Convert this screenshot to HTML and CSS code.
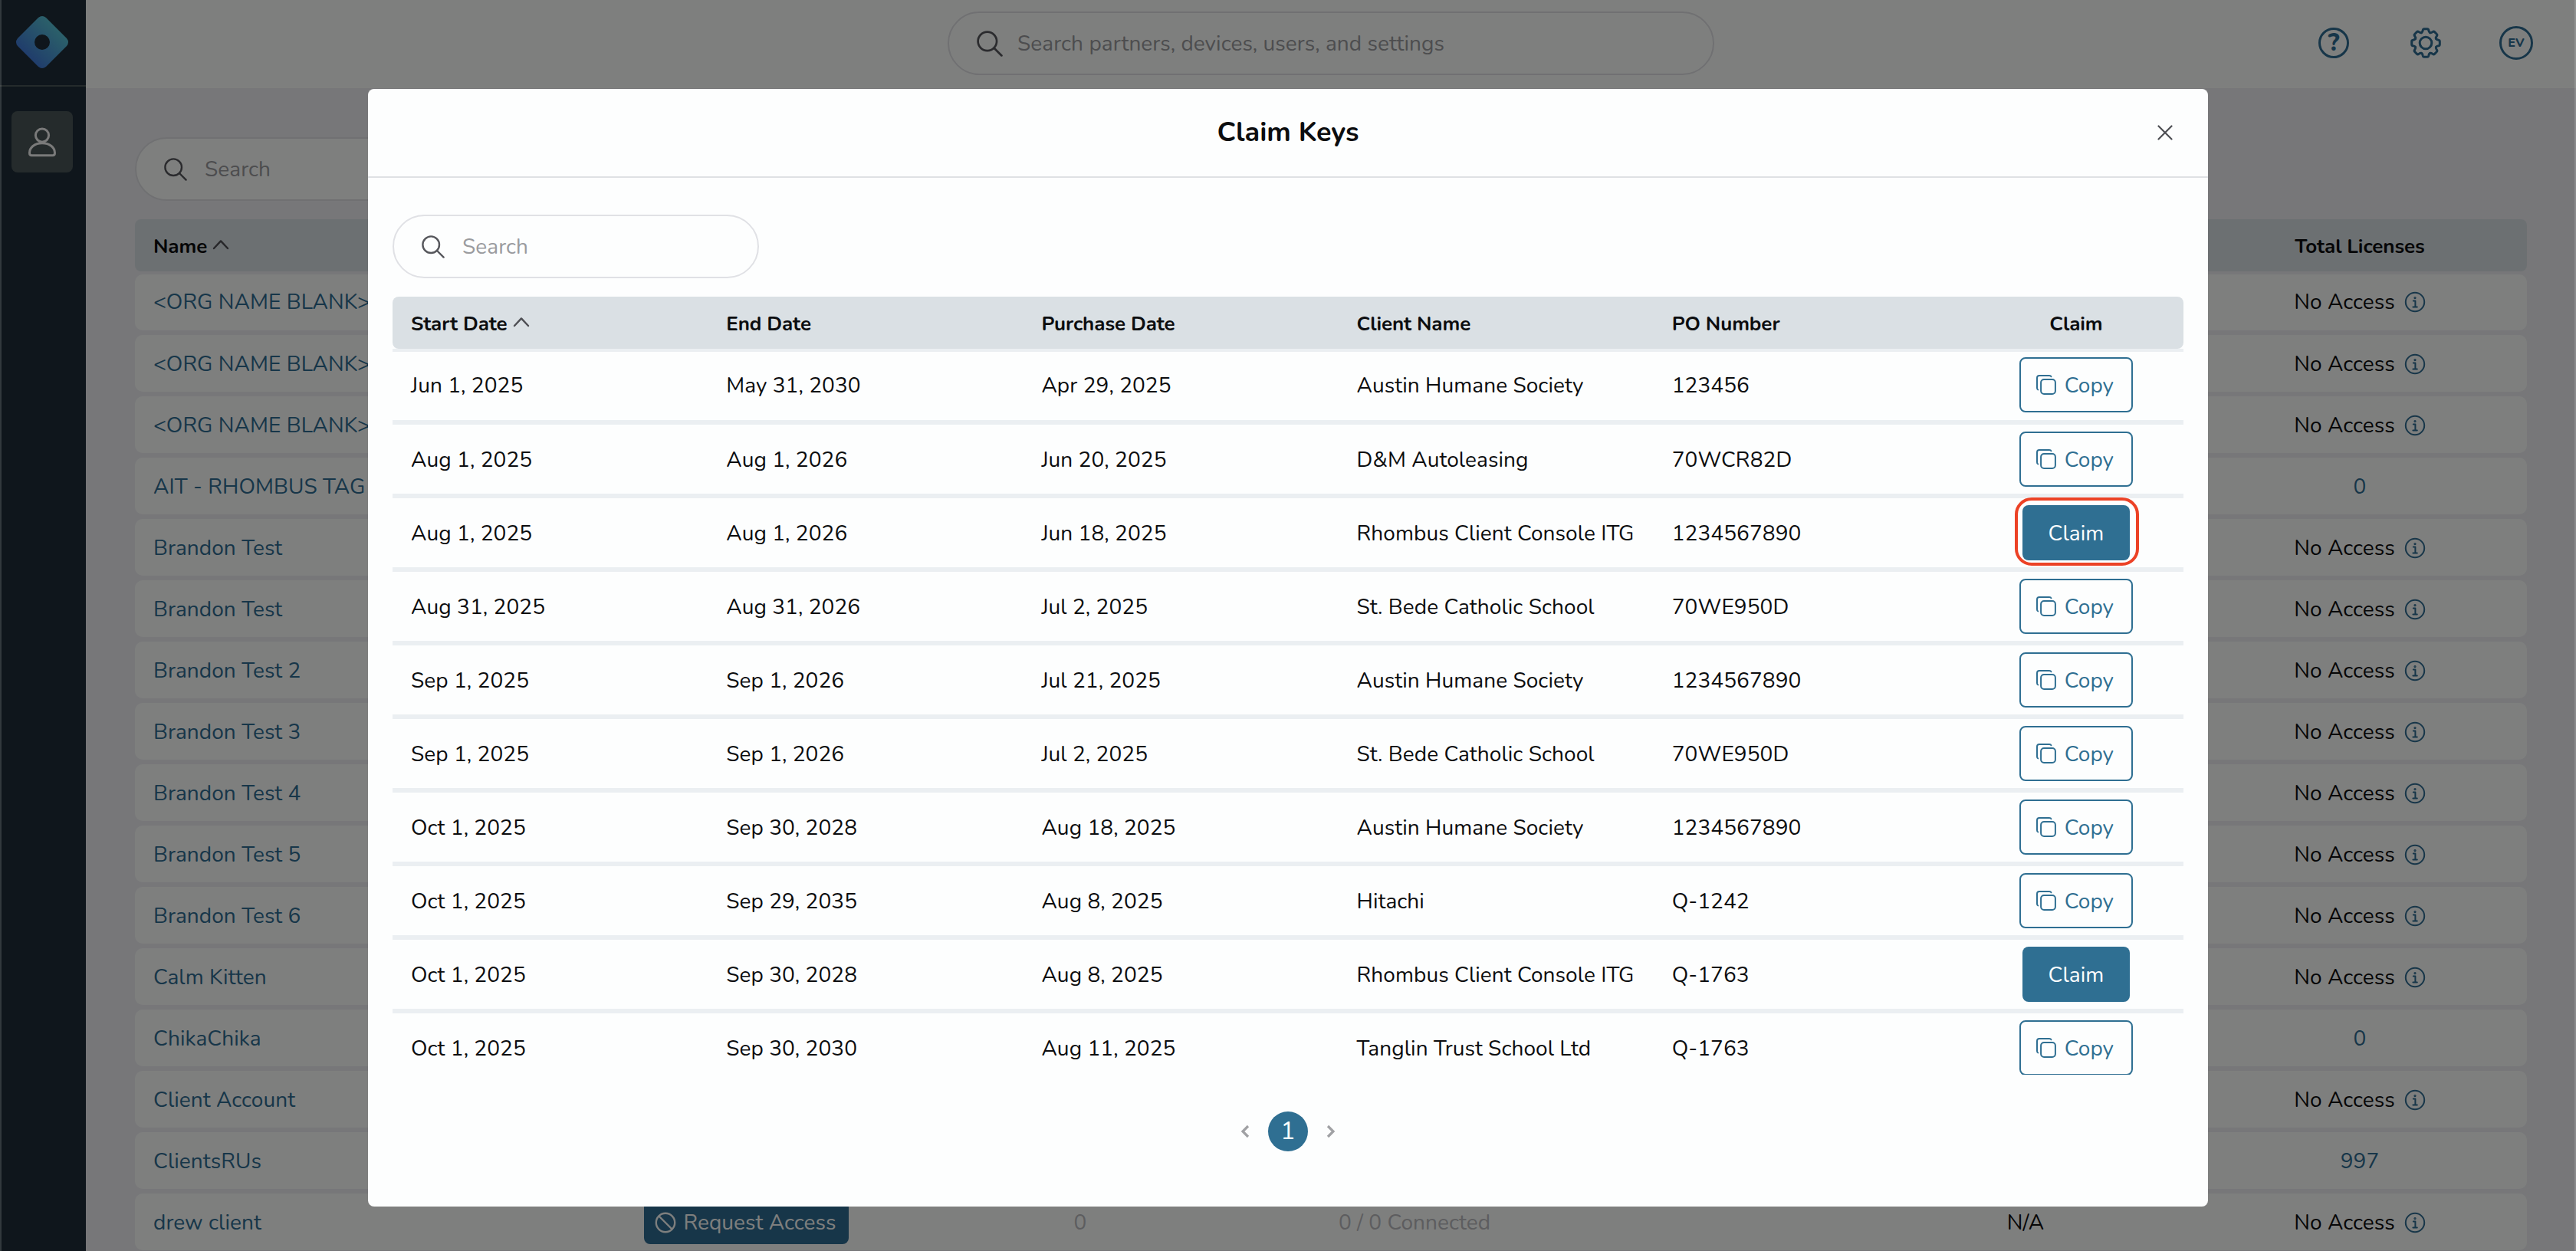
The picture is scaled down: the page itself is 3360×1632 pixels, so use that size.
FILE: index.html
```html
<!DOCTYPE html>
<html lang="en">
<head>
    <meta charset="UTF-8">
    <meta name="viewport" content="width=device-width, initial-scale=1.0">
    <title>Claim Keys</title>
    <link rel="stylesheet" href="styles.css">
</head>
<body>
    <svg class="sprite" aria-hidden="true">
        <defs>
            <linearGradient id="logoGradient" x1="0.1" y1="0.9" x2="0.8" y2="0.2">
                <stop offset="0" stop-color="#3a70dc"/>
                <stop offset="0.15" stop-color="#4078d8"/>
                <stop offset="1" stop-color="#58c4d4"/>
            </linearGradient>
        </defs>
        <symbol id="i-search" viewBox="0 0 30 30">
            <circle cx="12.2" cy="12.2" r="10.8"/>
            <path d="M20 20l8.6 8.6"/>
        </symbol>
        <symbol id="i-caret" viewBox="0 0 22 14">
            <path d="M2 12l9-9.6 9 9.6"/>
        </symbol>
        <symbol id="i-info" viewBox="0 0 28 28">
            <circle cx="14" cy="14" r="12.2"/>
            <path d="M11.8 12.4h2.6v7.6M11.4 20.4h5.4"/>
            <circle cx="14" cy="8.6" r="0.6"/>
        </symbol>
        <symbol id="i-copy" viewBox="0 0 28 28">
            <rect x="7.1" y="7.1" width="18.8" height="18.8" rx="4"/>
            <path d="M3.2 20.4Q2 20 2 18V5q0-3 3-3h13q2 0 2.400 1.200"/>
        </symbol>
    </svg>

    <div class="app">
        <nav class="sidebar">
            <div class="logo">
                <svg width="70" height="70" viewBox="-35 -35 70 70">
                    <path fill="url(#logoGradient)" fill-rule="evenodd" d="M-5-32Q0-36 5-32L32-5Q36 0 32 5L5 32Q0 36-5 32L-32 5Q-36 0-32-5ZM10 0A10 10 0 1 0-10 0A10 10 0 1 0 10 0Z"/>
                </svg>
            </div>
            <a class="nav-item">
                <svg class="icon" width="40" height="40" viewBox="0 0 40 40">
                    <circle cx="20" cy="11.6" r="8.6"/>
                    <path d="M20 21.8C10 21.8 3.5 27.5 3.5 34.5Q3.5 37.8 6.2 37.8H33.8Q36.5 37.8 36.5 34.5C36.5 27.5 30 21.8 20 21.8Z"/>
                </svg>
            </a>
        </nav>

        <div class="main">
            <header class="topbar">
                <div class="search search-global">
                    <svg class="icon"><use href="#i-search"/></svg>
                    <span>Search partners, devices, users, and settings</span>
                </div>
                <div class="topbar-actions">
                    <span class="help">?</span>
                    <svg class="icon gear" width="40" height="40" viewBox="-20 -20 40 40">
                        <circle r="7.8"/>
                        <path id="tooth" d="M-5.55-13.4C-4.2-14-4-15-3.8-16.5Q-3.5-18.3-2-18.3H2Q3.5-18.3 3.8-16.5C4-15 4.2-14 5.55-13.4"/>
                        <use href="#tooth" transform="rotate(45)"/>
                        <use href="#tooth" transform="rotate(90)"/>
                        <use href="#tooth" transform="rotate(135)"/>
                        <use href="#tooth" transform="rotate(180)"/>
                        <use href="#tooth" transform="rotate(225)"/>
                        <use href="#tooth" transform="rotate(270)"/>
                        <use href="#tooth" transform="rotate(315)"/>
                    </svg>
                    <span class="avatar">EV</span>
                </div>
            </header>

            <div class="content">
                <div class="search">
                    <svg class="icon"><use href="#i-search"/></svg>
                    <span>Search</span>
                </div>
                <div class="clients">
                    <div class="client-row client-head">
                        <div>Name <svg class="icon caret"><use href="#i-caret"/></svg></div>
                        <div class="last">Total Licenses</div>
                    </div>
                    <div class="client-row"><a>&lt;ORG NAME BLANK&gt;</a><div class="last">No Access <svg class="icon info"><use href="#i-info"/></svg></div></div>
                    <div class="client-row"><a>&lt;ORG NAME BLANK&gt;</a><div class="last">No Access <svg class="icon info"><use href="#i-info"/></svg></div></div>
                    <div class="client-row"><a>&lt;ORG NAME BLANK&gt;</a><div class="last">No Access <svg class="icon info"><use href="#i-info"/></svg></div></div>
                    <div class="client-row"><a>AIT - RHOMBUS TAG</a><a class="last">0</a></div>
                    <div class="client-row"><a>Brandon Test</a><div class="last">No Access <svg class="icon info"><use href="#i-info"/></svg></div></div>
                    <div class="client-row"><a>Brandon Test</a><div class="last">No Access <svg class="icon info"><use href="#i-info"/></svg></div></div>
                    <div class="client-row"><a>Brandon Test 2</a><div class="last">No Access <svg class="icon info"><use href="#i-info"/></svg></div></div>
                    <div class="client-row"><a>Brandon Test 3</a><div class="last">No Access <svg class="icon info"><use href="#i-info"/></svg></div></div>
                    <div class="client-row"><a>Brandon Test 4</a><div class="last">No Access <svg class="icon info"><use href="#i-info"/></svg></div></div>
                    <div class="client-row"><a>Brandon Test 5</a><div class="last">No Access <svg class="icon info"><use href="#i-info"/></svg></div></div>
                    <div class="client-row"><a>Brandon Test 6</a><div class="last">No Access <svg class="icon info"><use href="#i-info"/></svg></div></div>
                    <div class="client-row"><a>Calm Kitten</a><div class="last">No Access <svg class="icon info"><use href="#i-info"/></svg></div></div>
                    <div class="client-row"><a>ChikaChika</a><a class="last">0</a></div>
                    <div class="client-row"><a>Client Account</a><div class="last">No Access <svg class="icon info"><use href="#i-info"/></svg></div></div>
                    <div class="client-row"><a>ClientsRUs</a><a class="last">997</a></div>
                    <div class="client-row">
                        <a>drew client</a>
                        <div><span class="request">
                            <svg class="icon" width="28" height="28" viewBox="0 0 28 28"><circle cx="14" cy="14" r="12.2"/><path d="M5.5 5.5l17 17"/></svg>
                            Request Access</span></div>
                        <div class="muted">0</div>
                        <div class="muted">0 / 0 Connected</div>
                        <div></div>
                        <div>N/A</div>
                        <div class="last">No Access <svg class="icon info"><use href="#i-info"/></svg></div>
                    </div>
                </div>
            </div>
        </div>
    </div>

    <div class="overlay">
        <div class="modal">
            <div class="modal-header">
                <h1>Claim Keys</h1>
                <svg class="icon close" width="20" height="20" viewBox="0 0 20 20"><path d="M1.5 1.5l17 17M18.5 1.5l-17 17"/></svg>
            </div>
            <div class="modal-body">
                <div class="search">
                    <svg class="icon"><use href="#i-search"/></svg>
                    <span>Search</span>
                </div>
                <div class="keys-head key-row">
                    <div>Start Date <svg class="icon caret"><use href="#i-caret"/></svg></div>
                    <div>End Date</div>
                    <div>Purchase Date</div>
                    <div>Client Name</div>
                    <div>PO Number</div>
                    <div>Claim</div>
                </div>
                <div class="keys">
                    <div class="key-row"><div>Jun 1, 2025</div><div>May 31, 2030</div><div>Apr 29, 2025</div><div>Austin Humane Society</div><div>123456</div><div><button class="btn-copy"><svg class="icon"><use href="#i-copy"/></svg>Copy</button></div></div>
                    <div class="key-row"><div>Aug 1, 2025</div><div>Aug 1, 2026</div><div>Jun 20, 2025</div><div>D&amp;M Autoleasing</div><div>70WCR82D</div><div><button class="btn-copy"><svg class="icon"><use href="#i-copy"/></svg>Copy</button></div></div>
                    <div class="key-row"><div>Aug 1, 2025</div><div>Aug 1, 2026</div><div>Jun 18, 2025</div><div>Rhombus Client Console ITG</div><div>1234567890</div><div><button class="btn-claim highlight">Claim</button></div></div>
                    <div class="key-row"><div>Aug 31, 2025</div><div>Aug 31, 2026</div><div>Jul 2, 2025</div><div>St. Bede Catholic School</div><div>70WE950D</div><div><button class="btn-copy"><svg class="icon"><use href="#i-copy"/></svg>Copy</button></div></div>
                    <div class="key-row"><div>Sep 1, 2025</div><div>Sep 1, 2026</div><div>Jul 21, 2025</div><div>Austin Humane Society</div><div>1234567890</div><div><button class="btn-copy"><svg class="icon"><use href="#i-copy"/></svg>Copy</button></div></div>
                    <div class="key-row"><div>Sep 1, 2025</div><div>Sep 1, 2026</div><div>Jul 2, 2025</div><div>St. Bede Catholic School</div><div>70WE950D</div><div><button class="btn-copy"><svg class="icon"><use href="#i-copy"/></svg>Copy</button></div></div>
                    <div class="key-row"><div>Oct 1, 2025</div><div>Sep 30, 2028</div><div>Aug 18, 2025</div><div>Austin Humane Society</div><div>1234567890</div><div><button class="btn-copy"><svg class="icon"><use href="#i-copy"/></svg>Copy</button></div></div>
                    <div class="key-row"><div>Oct 1, 2025</div><div>Sep 29, 2035</div><div>Aug 8, 2025</div><div>Hitachi</div><div>Q-1242</div><div><button class="btn-copy"><svg class="icon"><use href="#i-copy"/></svg>Copy</button></div></div>
                    <div class="key-row"><div>Oct 1, 2025</div><div>Sep 30, 2028</div><div>Aug 8, 2025</div><div>Rhombus Client Console ITG</div><div>Q-1763</div><div><button class="btn-claim">Claim</button></div></div>
                    <div class="key-row"><div>Oct 1, 2025</div><div>Sep 30, 2030</div><div>Aug 11, 2025</div><div>Tanglin Trust School Ltd</div><div>Q-1763</div><div><button class="btn-copy"><svg class="icon"><use href="#i-copy"/></svg>Copy</button></div></div>
                </div>
                <div class="pagination">
                    <svg class="icon" width="12" height="18" viewBox="0 0 12 18"><path d="M10 2L3 9l7 7"/></svg>
                    <span class="page">1</span>
                    <svg class="icon" width="12" height="18" viewBox="0 0 12 18"><path d="M2 2l7 7-7 7"/></svg>
                </div>
            </div>
        </div>
    </div>
</body>
</html>
```

FILE: styles.css
```css
* { box-sizing: border-box; }
body { margin: 0; height: 1632px; overflow: hidden; font-family: Nunito, Lato, sans-serif; font-size: 28px; line-height: 38px; letter-spacing: 0.07px; color: #0c0d0f; }
.sprite { position: absolute; width: 0; height: 0; }
.icon { display: block; flex: none; fill: none; stroke: currentColor; stroke-width: 2.4; stroke-linecap: round; stroke-linejoin: round; }

.app { display: flex; height: 1632px; overflow: hidden; background-color: #eeeff3; }
.sidebar { width: 112px; flex: none; background-color: #1e2d38; }
.logo { height: 113px; padding: 20px 0 0 20px; border-bottom: 2px solid #4a5659; }
.nav-item { display: flex; align-items: center; justify-content: center; width: 80px; height: 80px; margin: 32px 0 0 15px; border-radius: 8px; background-color: #4b5759; color: #f4f4f4; }
.nav-item .icon { stroke-width: 3; }

.main { flex: 1; min-width: 0; }
.topbar { display: flex; justify-content: space-between; height: 115px; padding: 15px 56px 0 1124px; background-color: #fdfffd; }
.topbar-actions { display: flex; align-items: center; height: 82px; color: #2f6c92; }
.help { display: flex; align-items: center; justify-content: center; width: 40px; height: 40px; border: 3px solid; border-radius: 50%; font-size: 32px; font-weight: 800; line-height: 34px; }
.gear { margin-left: 80px; stroke-width: 3; }
.avatar { display: flex; align-items: center; justify-content: center; width: 44px; height: 44px; margin-left: 76px; border: 3px solid; border-radius: 50%; font-size: 16px; font-weight: 800; line-height: 22px; }

.search { display: flex; align-items: center; width: 478px; height: 83px; padding-left: 36px; border: 2px solid #e0e1e5; border-radius: 42px; background-color: #fdfefe; color: #9a9b9e; }
.search .icon { width: 30px; height: 30px; margin-right: 23px; color: #56575c; }
.search-global { width: 1000px; background-color: #fdfffd; }
.search-global .icon { width: 34px; height: 34px; margin-right: 19px; }

.content { padding: 64px 64px 0 64px; }
.content .search { background-color: #fdfffd; }
.clients { margin-top: 24px; }
.client-row { display: grid; grid-template-columns: 579px 436px 436px 436px 361px 436px 436px; align-items: center; height: 74px; margin-bottom: 6px; border-radius: 10px; background-color: #fdfffd; }
.client-row > * { display: flex; align-items: center; justify-content: center; padding-top: 1px; white-space: nowrap; }
.client-row > :first-child { justify-content: flex-start; padding-left: 24px; }
.client-row a { color: #2f6c92; }
.client-row .last { grid-column: 7; }
.client-head { height: 68px; margin-bottom: 4px; border-radius: 8px; background-color: #d9e0e5; font-size: 26px; font-weight: 700; letter-spacing: -0.08px; padding-top: 2px; }
.client-head + .client-row { height: 73px; padding-bottom: 3px; }
.info { width: 28px; height: 28px; margin-left: 12px; stroke-width: 2; color: #2f6c92; }
.caret { width: 22px; height: 14px; margin: 0 0 6px 7px; color: #4e4f54; }
.muted { color: #babbbf; }
.request { display: flex; align-items: center; width: 267px; height: 56px; padding-left: 14px; border-radius: 8px; background-color: #2f6c92; color: #fdfffd; }
.request .icon { margin-right: 10px; }

/* window edge shows through as a thin strip left and right */
.overlay { position: fixed; inset: 0; border: solid rgba(255,255,255,0.15); border-width: 0 2px; background-color: rgba(0,0,0,0.5); }
.modal { width: 2400px; height: 1458px; margin: 116px auto 0; border-radius: 8px; background-color: #fdfefe; }
.modal-header { display: flex; align-items: center; height: 116px; padding: 0 46px; border-bottom: 2px solid #dfe1e4; }
.modal-header h1 { flex: 1; margin: 0; padding-left: 20px; text-align: center; font-size: 36px; font-weight: 700; line-height: 48px; letter-spacing: 0; }
.close { stroke-width: 2.2; color: #4e4f54; }
.modal-body { padding: 48px 32px 0; }

.key-row { display: grid; grid-template-columns: repeat(5, 411.2px) 280px; align-items: center; height: 96px; border-bottom: 6px solid #ebeff2; }
.key-row > div { display: flex; align-items: center; padding: 2px 0 0 24px; white-space: nowrap; }
.key-row > div:last-child { justify-content: center; padding: 0; }
.keys-head { height: 68px; margin-top: 24px; border: 0; border-radius: 8px; background-color: #dae0e4; font-size: 26px; font-weight: 700; letter-spacing: -0.08px; padding-top: 2px; }
.keys-head > div:last-child { padding-top: 2px; }
.keys { height: 947px; overflow: hidden; border-top: 4px solid #ebeff2; }
.keys .key-row:first-child { height: 95px; padding-bottom: 3px; }
.keys .key-row:last-child { border-bottom-color: transparent; }

button { position: relative; display: flex; align-items: center; justify-content: center; height: 72px; padding: 2px 0 0; border-radius: 8px; font: inherit; letter-spacing: inherit; }
.btn-copy { width: 148px; padding-right: 4px; border: 2px solid #2f6f92; background-color: #fdfefe; color: #2f6f92; }
.btn-copy .icon { width: 28px; height: 28px; margin: 0 10px 2px 0; stroke-width: 2; }
.btn-claim { width: 140px; border: 0; background-color: #2f6f92; color: #fdfefe; }
.highlight::after { content: ""; position: absolute; inset: -10px -12px -7px -10px; border: 4px solid #ec4226; border-radius: 22px; }

.pagination { display: flex; align-items: center; justify-content: center; gap: 24px; margin-top: 48px; color: #a0a1a4; }
.pagination .icon { stroke-width: 3.2; stroke-linecap: butt; stroke-linejoin: miter; }
.page { width: 52px; height: 52px; border-radius: 50%; background-color: #2f6f92; color: #fdfefe; font-size: 32px; line-height: 51px; text-align: center; }
```
